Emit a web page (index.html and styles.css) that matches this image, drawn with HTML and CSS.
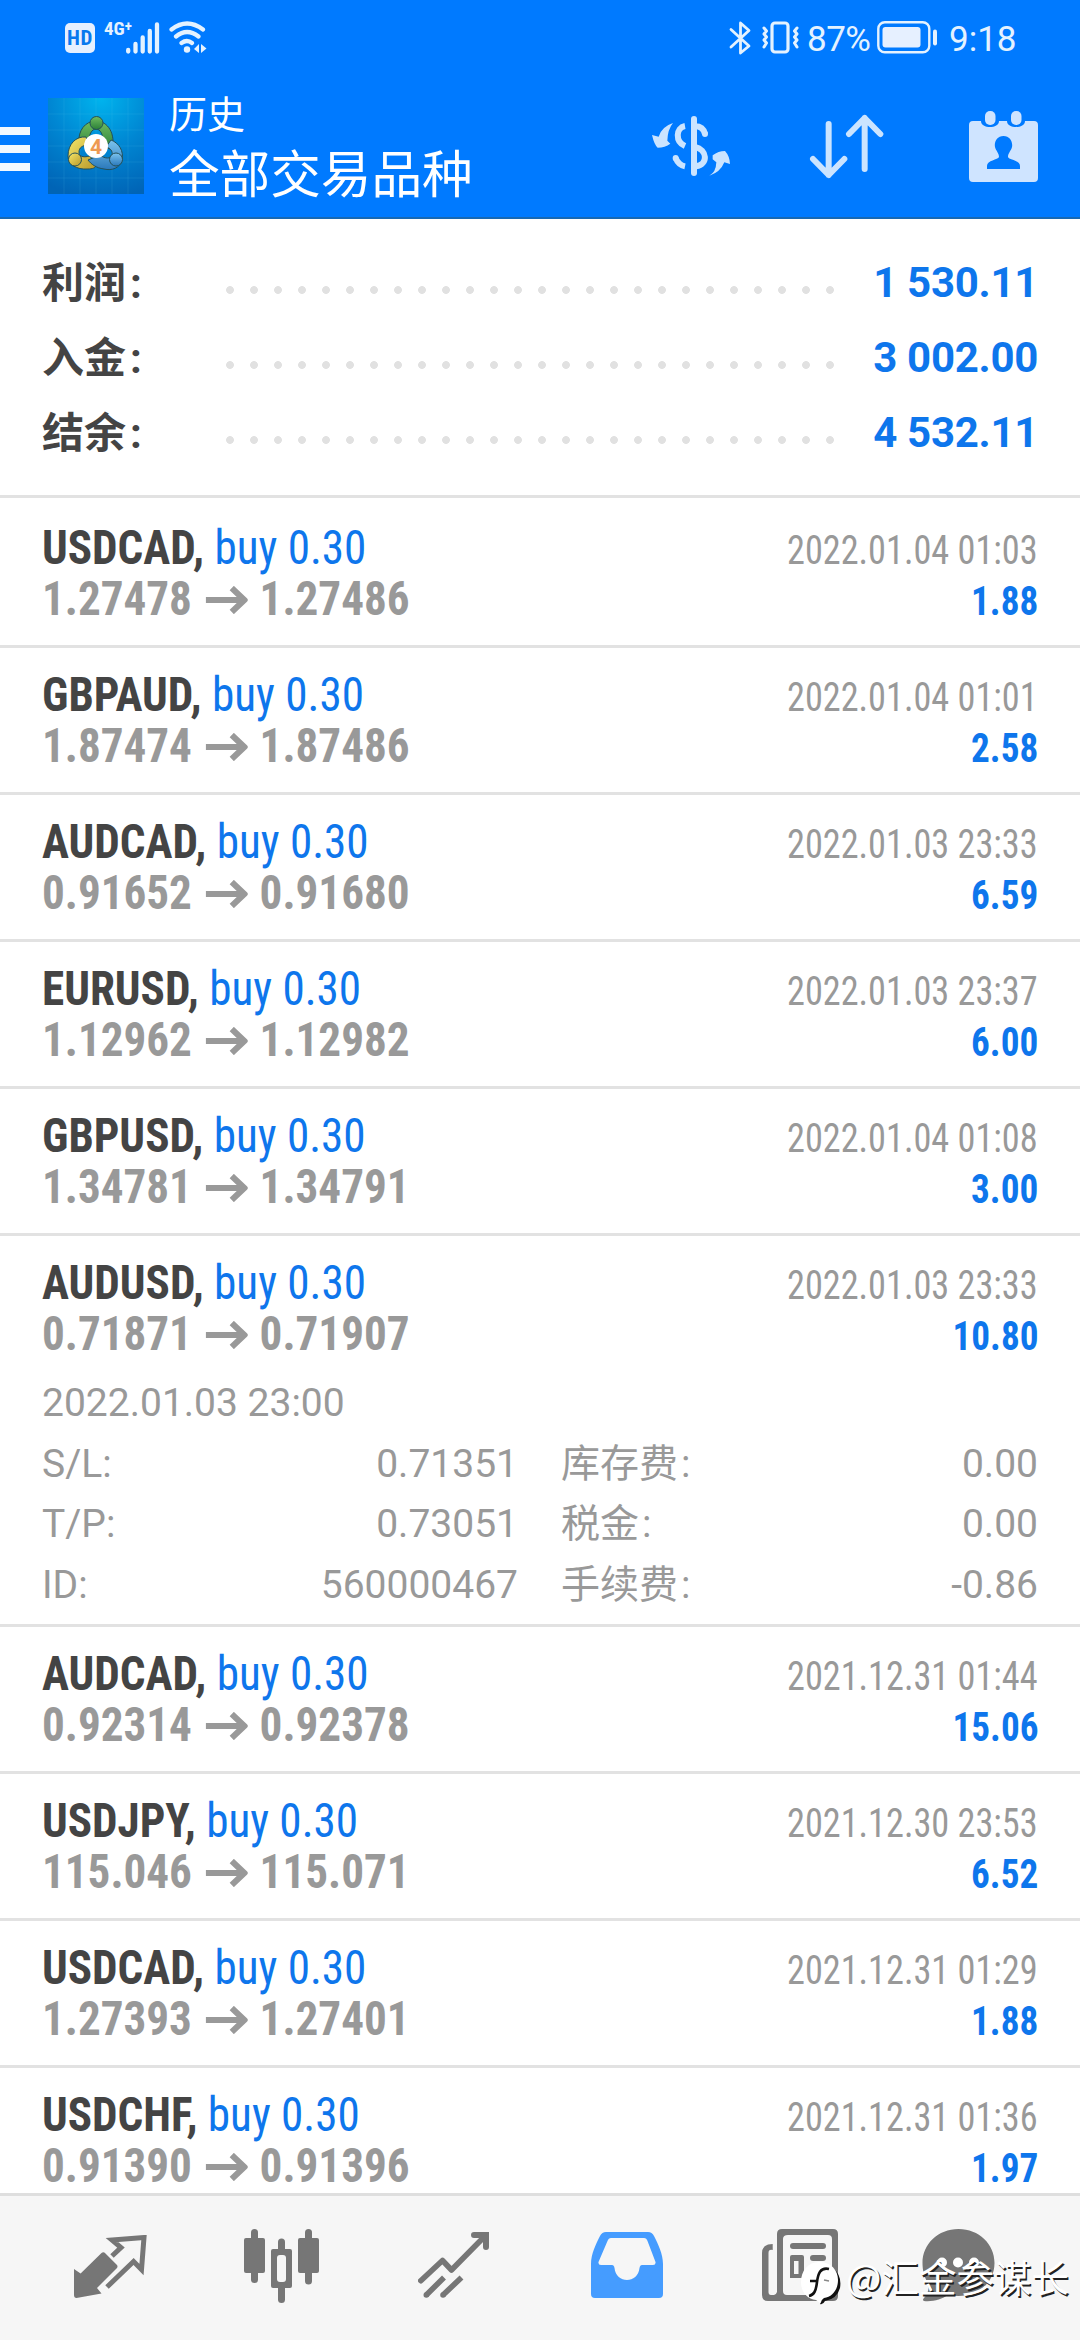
FILE: index.html
```
<!DOCTYPE html>
<html lang="zh-CN">
<head>
<meta charset="utf-8">
<title>历史</title>
<link rel="stylesheet" href="styles.css">
</head>
<body>
<div class="screen">
  <header class="header">
    <div class="status">
      <div class="status-left">
        <span class="hd">HD</span>
        <span class="net">4G<sup class="plus">+</sup></span>
        <svg class="signal" width="34" height="32" viewBox="0 0 34 32"><path d="M2.2 28v1.5M9.5 22v7.5M16.7 15.5v14M23.8 9v20.500M31 2.500v27" stroke="#e4f2ff" stroke-width="4.300" stroke-linecap="round"/></svg>
        <svg class="wifi" width="38" height="33" viewBox="0 0 38 33" fill="none" stroke="#e4f2ff" stroke-width="4.200" stroke-linecap="round"><path d="M2.500 8.500Q18 -3.500 34 8.500M7 15.500Q18 6.500 29.500 15.500M12.500 22Q18 18 23 22"/><circle cx="18" cy="28.500" r="3.200" fill="#e4f2ff" stroke="none"/><path d="M30 23v9l-5-4zM32 23v9l5.500-4.500z" fill="#e4f2ff" stroke="none"/></svg>
      </div>
      <div class="status-right">
        <svg class="bt" width="24" height="34" viewBox="0 0 24 34" fill="none" stroke="#e4f2ff" stroke-width="2.800" stroke-linejoin="round" stroke-linecap="round"><path d="M3 8.500L21 25l-8.500 7V2L21 9.500 3 26"/></svg>
        <svg class="vib" width="40" height="33" viewBox="0 0 40 33" fill="none" stroke="#e4f2ff" stroke-linecap="round" stroke-linejoin="round"><rect x="11" y="2" width="16" height="29" rx="3" stroke-width="3.200"/><path d="M3 7l2.500 3L3 13l2.500 3L3 19l2.500 3L3 26M36 7l-2.500 3 2.500 3-2.500 3 2.500 3-2.500 3 2.500 4" stroke-width="3"/></svg>
        <span class="pct">87%</span>
        <svg class="batt" width="62" height="33" viewBox="0 0 62 33"><rect x="1.300" y="1.300" width="51" height="30" rx="6.500" fill="none" stroke="#e4f2ff" stroke-width="2.400"/><rect x="5.500" y="6" width="38" height="20.500" rx="3" fill="#e6f0ff"/><rect x="56" y="8.500" width="4" height="16" rx="2" fill="#e4f2ff"/></svg>
        <span class="time">9:18</span>
      </div>
    </div>
    <div class="bar">
      <div class="menu"><i></i><i></i><i></i></div>
      <svg class="logo" width="96" height="96" viewBox="0 0 96 96">
        <defs>
          <radialGradient id="bg" cx=".55" cy="0" r="1.050"><stop offset="0" stop-color="#00b4ee"/><stop offset=".5" stop-color="#0087d3"/><stop offset="1" stop-color="#0064b6"/></radialGradient>
          <linearGradient id="gr" x2="0" y2="1"><stop offset="0" stop-color="#70bd60"/><stop offset="1" stop-color="#2a7f38"/></linearGradient>
          <linearGradient id="ye" x2="1" y2="1"><stop offset="0" stop-color="#f6e76a"/><stop offset="1" stop-color="#b8982a"/></linearGradient>
          <linearGradient id="bl" x2="0" y2="1"><stop offset="0" stop-color="#7cc4ee"/><stop offset="1" stop-color="#2a78ba"/></linearGradient>
        </defs>
        <rect width="96" height="96" fill="url(#bg)"/>
        <path d="M16 0v96M32 0v96M48 0v96M64 0v96M80 0v96M0 16h96M0 32h96M0 48h96M0 64h96M0 80h96" stroke="#5cc8f0" stroke-opacity=".13"/>
        <g stroke="#245058" stroke-width="1">
          <path d="M48 23C60 23 68 36 64 52L55 48C56 36 52 31 48 31S40 36 41 48L31 44C30 33 37 23 48 23Z" fill="url(#gr)"/>
          <path d="M38 39C28 38 20 46 20 58C20 66 28 72 40 71C44 71 48 70 48 67L42 58C34 60 31 58 31 54C31 50 34 47 41 47Z" fill="url(#ye)"/>
          <path d="M63 42C71 45 76 53 74 62C72 70 64 73 56 71C48 70 43 66 40 62L52 57C57 61 63 61 64 57C65 53 62 50 58 49Z" fill="url(#bl)"/>
          <circle cx="48.500" cy="25" r="6.500" fill="url(#gr)"/>
          <circle cx="27" cy="61.500" r="6.500" fill="url(#ye)"/>
          <circle cx="68" cy="61.500" r="6.500" fill="url(#bl)"/>
        </g>
        <circle cx="48" cy="48" r="12" fill="#fff"/>
        <text x="48" y="55.500" class="four">4</text>
      </svg>
      <div class="titles"><div class="sub">历史</div><div class="main">全部交易品种</div></div>
      <svg class="ic-money" width="80" height="62" viewBox="30 42 240 186" fill="none" stroke="#cbe4ff" stroke-width="18"><path d="M159 54V216" stroke-linecap="round"/><path d="M132 75C104 80 102 122 132 135M162 76C180 76 189 86 192 99M162 138C199 146 203 190 165 196"/><path d="M192 98v1M104 171v1" stroke-linecap="round"/><path d="M104 171Q112 192 132 196"/><path d="M96 66Q80 85 79 119L88 128Q72 140 50 140Q40 132 33 102L53 107Q62 77 96 66ZM205 224Q225 214 226 184L215 175V163Q232 150 252 150Q266 165 267 189L250 184Q238 214 205 224Z" fill="#cbe4ff" stroke="none"/></svg>
      <svg class="ic-sort" width="75" height="65" viewBox="505 42 225 195" fill="none" stroke="#cbe4ff" stroke-width="18" stroke-linecap="round" stroke-linejoin="round"><path d="M564 72V225M517 177L564 225L611 177M672 207V54M625 102L672 54L719 102"/></svg>
      <svg class="ic-cal" width="69" height="71" viewBox="0 0 69 71"><path d="M4 10H12C12 18 30 18 30 10H38C38 18 56 18 56 10H65Q69 10 69 14V67Q69 71 65 71H4Q0 71 0 67V14Q0 10 4 10Z" fill="#cfe4ff"/><rect x="16" y="0" width="10.500" height="14" rx="5" fill="#cfe4ff"/><rect x="42" y="0" width="10.500" height="14" rx="5" fill="#cfe4ff"/><path d="M34.500 25C28 25 25 31 26 36C27 40 30 42 30 46C29 49 18 49 18 55V58H51V55C51 49 40 49 39 46C39 42 42 40 43 36C44 31 41 25 34.500 25Z" fill="#007aff"/></svg>
    </div>
  </header>

  <section class="summary">
    <div class="sum"><span class="sum-label">利润<i>:</i></span><span class="dots"></span><span class="sum-value">1 530.11</span></div>
    <div class="sum"><span class="sum-label">入金<i>:</i></span><span class="dots"></span><span class="sum-value">3 002.00</span></div>
    <div class="sum"><span class="sum-label">结余<i>:</i></span><span class="dots"></span><span class="sum-value">4 532.11</span></div>
  </section>

  <svg class="defs" width="0" height="0"><symbol id="to" viewBox="0 0 42 28" preserveAspectRatio="none"><path d="M0 14H38M26 2L38.500 14L26 26" fill="none" stroke="#999" stroke-width="6"/></symbol></svg>

  <main class="list">
    <article class="trade first">
      <div class="line"><span class="deal"><b class="sym">USDCAD,</b> <span class="side">buy 0.30</span></span><span class="date">2022.01.04 01:03</span></div>
      <div class="line"><span class="price">1.27478<svg class="to"><use href="#to"/></svg>1.27486</span><span class="profit">1.88</span></div>
    </article>
    <article class="trade">
      <div class="line"><span class="deal"><b class="sym">GBPAUD,</b> <span class="side">buy 0.30</span></span><span class="date">2022.01.04 01:01</span></div>
      <div class="line"><span class="price">1.87474<svg class="to"><use href="#to"/></svg>1.87486</span><span class="profit">2.58</span></div>
    </article>
    <article class="trade">
      <div class="line"><span class="deal"><b class="sym">AUDCAD,</b> <span class="side">buy 0.30</span></span><span class="date">2022.01.03 23:33</span></div>
      <div class="line"><span class="price">0.91652<svg class="to"><use href="#to"/></svg>0.91680</span><span class="profit">6.59</span></div>
    </article>
    <article class="trade">
      <div class="line"><span class="deal"><b class="sym">EURUSD,</b> <span class="side">buy 0.30</span></span><span class="date">2022.01.03 23:37</span></div>
      <div class="line"><span class="price">1.12962<svg class="to"><use href="#to"/></svg>1.12982</span><span class="profit">6.00</span></div>
    </article>
    <article class="trade">
      <div class="line"><span class="deal"><b class="sym">GBPUSD,</b> <span class="side">buy 0.30</span></span><span class="date">2022.01.04 01:08</span></div>
      <div class="line"><span class="price">1.34781<svg class="to"><use href="#to"/></svg>1.34791</span><span class="profit">3.00</span></div>
    </article>
    <article class="trade open">
      <div class="line"><span class="deal"><b class="sym">AUDUSD,</b> <span class="side">buy 0.30</span></span><span class="date">2022.01.03 23:33</span></div>
      <div class="line"><span class="price">0.71871<svg class="to"><use href="#to"/></svg>0.71907</span><span class="profit">10.80</span></div>
      <div class="details">
        <div class="opened">2022.01.03 23:00</div>
        <div class="pair"><span>S/L:</span><span>0.71351</span></div><div class="pair"><span>库存费<i>:</i></span><span>0.00</span></div>
        <div class="pair"><span>T/P:</span><span>0.73051</span></div><div class="pair"><span>税金<i>:</i></span><span>0.00</span></div>
        <div class="pair"><span>ID:</span><span>560000467</span></div><div class="pair"><span>手续费<i>:</i></span><span>-0.86</span></div>
      </div>
    </article>
    <article class="trade">
      <div class="line"><span class="deal"><b class="sym">AUDCAD,</b> <span class="side">buy 0.30</span></span><span class="date">2021.12.31 01:44</span></div>
      <div class="line"><span class="price">0.92314<svg class="to"><use href="#to"/></svg>0.92378</span><span class="profit">15.06</span></div>
    </article>
    <article class="trade">
      <div class="line"><span class="deal"><b class="sym">USDJPY,</b> <span class="side">buy 0.30</span></span><span class="date">2021.12.30 23:53</span></div>
      <div class="line"><span class="price">115.046<svg class="to"><use href="#to"/></svg>115.071</span><span class="profit">6.52</span></div>
    </article>
    <article class="trade">
      <div class="line"><span class="deal"><b class="sym">USDCAD,</b> <span class="side">buy 0.30</span></span><span class="date">2021.12.31 01:29</span></div>
      <div class="line"><span class="price">1.27393<svg class="to"><use href="#to"/></svg>1.27401</span><span class="profit">1.88</span></div>
    </article>
    <article class="trade">
      <div class="line"><span class="deal"><b class="sym">USDCHF,</b> <span class="side">buy 0.30</span></span><span class="date">2021.12.31 01:36</span></div>
      <div class="line"><span class="price">0.91390<svg class="to"><use href="#to"/></svg>0.91396</span><span class="profit">1.97</span></div>
    </article>
  </main>

  <nav class="nav">
    <svg class="n1" width="73" height="63" viewBox="0 0 73 63"><path d="M0 34L6.600 38.500L27.500 18Q29.500 16.500 31.500 18.500L43 30Q44 31.500 43 33L23 53L27.500 58.500L2.500 63Q0 63 0 60Z" fill="#767676"/><path d="M38 21L47 12.500L38 5L70 2.500L67.500 34.500L59.600 26.500L33 52" fill="none" stroke="#767676" stroke-width="5"/></svg>
    <svg class="n2" width="75" height="74" viewBox="0 0 75 74" fill="#767676"><rect y="9" width="21" height="35" rx="2"/><rect x="7" width="7" height="54" rx="3.500"/><rect x="34" y="9.500" width="7" height="64.500" rx="3.500"/><rect x="27" y="20" width="21" height="39" rx="2"/><rect x="33" y="26" width="9" height="27" rx="3" fill="#f6f6f6"/><rect x="54" y="9" width="21" height="35" rx="2"/><rect x="61" width="7" height="55.500" rx="3.500"/></svg>
    <svg class="n3" width="71" height="66" viewBox="0 0 71 66" fill="none" stroke="#767676" stroke-width="5.600"><path d="M2.800 48.700L24.500 28.500L33.500 38L66 5" stroke-linecap="round" stroke-linejoin="round"/><path d="M56 3H68V15" stroke-width="6" stroke-linecap="round"/><path d="M8.300 63L26 45.500M25 63L43.500 45.500"/><path d="M8.300 63h.1M25 63h.1" stroke-linecap="round"/></svg>
    <svg class="n4" width="72" height="66" viewBox="0 0 72 66"><path fill-rule="evenodd" fill="#459cff" d="M15 0H57Q61 0 63 4C67 12 72 22 72 32V62Q72 66 68 66H4Q0 66 0 62V32C0 22 5 12 9 4Q11 0 15 0ZM20 6Q17.500 6 16.500 9L7.500 30Q7 33 10 33H21Q23 33 23.500 36C25 52 47 52 48.500 36Q49 33 51 33H62Q65 33 64.500 30L56.500 9Q55.500 6 53 6Z"/></svg>
    <svg class="n5" width="76" height="72" viewBox="0 0 76 72" fill="#767676"><path d="M10.700 15V21Q6.500 20 6.500 24V63Q6.500 66 9 66H12Q14 66 15 63V5Q15 0 20 0H71Q76 0 76 5V67Q76 72 71 72H6Q0 72 0 66V24Q0 15 10.700 15ZM26 6Q21 6 21 10V62Q21 66 25 66H66Q70 66 70 62V10Q70 6 66 6Z" fill-rule="evenodd"/><rect x="28" y="14" width="36" height="6" rx="3"/><path fill-rule="evenodd" d="M30 26H40Q42 26 42 28V49H28V28Q28 26 30 26ZM32 32V45H36.500V32Z"/><rect x="48" y="26" width="16" height="6" rx="3"/></svg>
    <svg class="n6" width="73" height="73" viewBox="0 0 73 73"><path d="M36.500 0C57 0 72.500 15 72.500 34C72.500 53 57 67 36.500 67Q31 67 26 66C20 70 11 73 2 72Q0 71 2 69Q8 63 6 54C2 48 .5 41 .5 34C.5 15 16 0 36.500 0Z" fill="#767676"/><g fill="#fff"><circle cx="20" cy="33.500" r="5"/><circle cx="36" cy="33.500" r="5"/><circle cx="52" cy="33.500" r="5"/></g></svg>
  </nav>

  <div class="watermark">
    <svg width="40" height="43" viewBox="0 0 40 43"><path d="M33 7Q41 14 39 26Q36 37 24 39Q22 43 19 42L22 36Z" fill="#111"/><path d="M18 0C30 0 37 8 37 18C37 28 31 35 23 36Q20 38 19 41L15 38C6 37 0 30 0 20C0 9 7 0 18 0Z" fill="#fff"/><path d="M28 7C19 5 17 12 16 20C15 29 13 33 8 34M9 19H16" fill="none" stroke="#111" stroke-width="2.600"/><path d="M23 18L28 19" stroke="#888" stroke-width="1.500"/></svg>
    <span>@汇金参谋长</span>
  </div>
</div>
</body>
</html>
```
FILE: styles.css
```
* { box-sizing: border-box; }
body { margin: 0; font-family: Roboto, "Noto Sans CJK SC", sans-serif; background: #fff; }
svg { display: block; flex: none; }
.screen { position: relative; width: 1080px; height: 2340px; display: flex; flex-direction: column; overflow: hidden; background: #fff; }

.header { height: 219px; flex: none; background: #007aff; border-bottom: 2px solid #1769b4; color: #fff; }
.status { height: 75px; display: flex; justify-content: space-between; align-items: center; padding: 0 63px 0 65px; color: #e4f2ff; }
.status-left, .status-right { display: flex; align-items: center; }
.hd { width: 30px; height: 30px; border-radius: 5px; background: #e6f0ff; color: #0878ee; font: 700 21px/31px "Roboto Condensed", sans-serif; text-align: center; letter-spacing: 0.5px; }
.net { margin: -17px 0 0 9px; width: 22px; font: 700 19px/20px "Roboto Condensed", sans-serif; white-space: nowrap; }
.plus { font-size: 15px; line-height: 0; vertical-align: 4px; }
.wifi { margin-left: 9px; }
.bt { margin-right: 9px; }
.vib { margin-right: 6px; }
.pct { width: 70px; font-size: 35px; letter-spacing: -0.5px; padding-top: 4px; }
.batt { margin-right: 10px; }
.time { width: 68px; font-size: 35px; padding-top: 4px; white-space: nowrap; }

.bar { height: 142px; display: flex; align-items: center; }
.menu { width: 30px; margin-right: 18px; padding-top: 6px; display: flex; flex-direction: column; gap: 10px; }
.menu i { height: 8px; background: #f2f8ff; }
.four { font: 700 21px Roboto, sans-serif; fill: #ee9a52; text-anchor: middle; }
.titles { width: 507px; padding: 3px 0 0 25px; white-space: nowrap; }
.sub { font-size: 38px; line-height: 56px; }
.main { font-size: 50.600px; line-height: 66px; }
.ic-money { margin-right: 78px; }
.ic-sort { margin-right: 85px; }

.summary { flex: none; height: 276px; padding: 26px 42px 0; }
.sum { display: flex; height: 75px; line-height: 75px; font-size: 42px; font-weight: 700; color: #444; }
.sum-label { width: 176px; padding-top: 1px; }
.sum-label i { font-style: normal; margin-left: 4px; }
.dots { width: 624px; background: radial-gradient(circle at 12px 45px, #e1e1e1 3.500px, transparent 4.300px) 0 0 / 24px 75px repeat-x; }
.sum-value { flex: 1; text-align: right; color: #0e76ec; white-space: nowrap; letter-spacing: -0.3px; }

.list { height: 1698px; flex: none; overflow: hidden; }
.trade { border-top: 3px solid #e2e2e2; padding: 21px 42px; font-family: "Roboto Condensed", Roboto, sans-serif; }
.first { padding-top: 24px; }
.line { display: flex; justify-content: space-between; align-items: baseline; height: 51px; line-height: 51px; font-size: 48px; white-space: nowrap; }
.deal, .price { transform: scaleX(0.94); transform-origin: left; }
.sym { color: #444; }
.side { color: #0e76ec; }
.date, .profit { font-size: 40px; line-height: 40px; transform-origin: right; }
.date { color: #999; transform: scaleX(0.906); }
.profit { color: #0e76ec; font-weight: 700; transform: scaleX(0.93); }
.price { color: #999; font-weight: 700; }
.to { display: inline-block; width: 45px; height: 28px; margin: 0 13px 0 14px; vertical-align: 1px; }
.open { padding-bottom: 9px; }
.details { margin-top: 14px; height: 242px; display: grid; grid-template-columns: 476px 477px; column-gap: 43px; grid-auto-rows: 60.700px; font: 39px/60.700px Roboto, "Noto Sans CJK SC", sans-serif; color: #999; }
.opened { grid-column: 1 / -1; }
.pair { display: flex; justify-content: space-between; }
.pair i { font-style: normal; margin-left: 3px; }

.nav { flex: 1; background: #f6f6f6; border-top: 3px solid #dedede; padding: 33px 0 0 74px; display: grid; grid-template-columns: 170px 174px 172.500px 171.500px 160px 73px; align-items: start; }
.n1 { margin-top: 6px; }
.n3, .n4 { margin-top: 3px; }
.watermark { position: absolute; left: 801px; top: 2254px; display: flex; align-items: center; gap: 5px; font: 37.500px/46px "Noto Sans CJK SC", sans-serif; color: #fff; text-shadow: 1.500px 1.500px 0 #222; white-space: nowrap; }
.watermark svg { margin-top: 8px; }
.watermark span { margin-top: -7px; }
```
